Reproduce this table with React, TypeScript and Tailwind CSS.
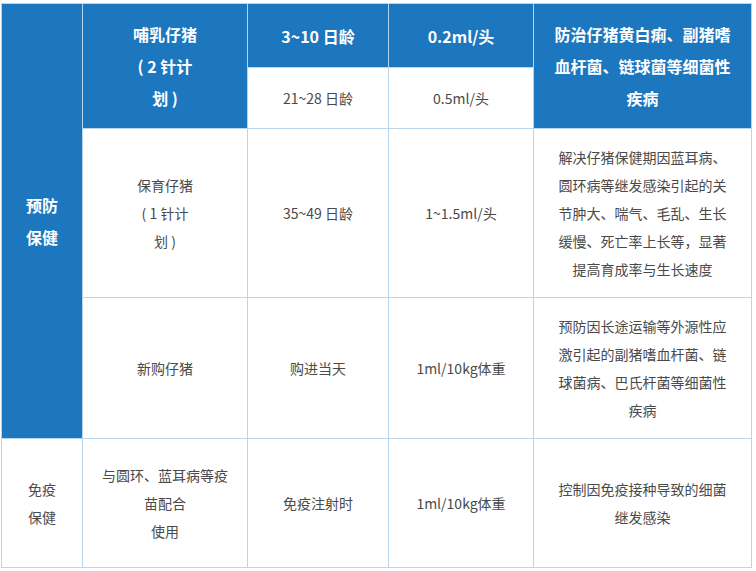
const blue = "bg-[#1d77bf] text-white font-bold text-[16px] leading-[2]";
const cell = "border border-[#b8d5ee] text-center align-middle p-0";
const body = "text-[#4a4a4a] text-[14px] leading-[2]";

export default function App() {
  return (
    <div className="bg-white w-[756px] h-[571px] pt-[3px] pl-[1px] font-['Microsoft_YaHei','Noto_Sans_CJK_SC',sans-serif]">
      <table className="table-fixed border-collapse w-[750px]">
        <colgroup>
          <col className="w-[81px]" />
          <col className="w-[165px]" />
          <col className="w-[141px]" />
          <col className="w-[145px]" />
          <col className="w-[218px]" />
        </colgroup>
        <tbody>
          <tr className="h-[64px]">
            <td rowSpan={4} className={`${cell} ${blue}`}>
              预防
              <br />
              保健
            </td>
            <td rowSpan={2} className={`${cell} ${blue}`}>
              哺乳仔猪
              <br />
              ( 2 针计
              <br />
              划 )
            </td>
            <td className={`${cell} ${blue}`}>3~10 日龄</td>
            <td className={`${cell} ${blue}`}>0.2ml/头</td>
            <td rowSpan={2} className={`${cell} ${blue}`}>
              防治仔猪黄白痢、副猪嗜
              <br />
              血杆菌、链球菌等细菌性
              <br />
              疾病
            </td>
          </tr>
          <tr className="h-[61px]">
            <td className={`${cell} ${body}`}>21~28 日龄</td>
            <td className={`${cell} ${body}`}>0.5ml/头</td>
          </tr>
          <tr className="h-[169px]">
            <td className={`${cell} ${body}`}>
              保育仔猪
              <br />
              ( 1 针计
              <br />
              划 )
            </td>
            <td className={`${cell} ${body}`}>35~49 日龄</td>
            <td className={`${cell} ${body}`}>1~1.5ml/头</td>
            <td className={`${cell} ${body}`}>
              解决仔猪保健期因蓝耳病、
              <br />
              圆环病等继发感染引起的关
              <br />
              节肿大、喘气、毛乱、生长
              <br />
              缓慢、死亡率上长等，显著
              <br />
              提高育成率与生长速度
            </td>
          </tr>
          <tr className="h-[141px]">
            <td className={`${cell} ${body}`}>新购仔猪</td>
            <td className={`${cell} ${body}`}>购进当天</td>
            <td className={`${cell} ${body}`}>1ml/10kg体重</td>
            <td className={`${cell} ${body}`}>
              预防因长途运输等外源性应
              <br />
              激引起的副猪嗜血杆菌、链
              <br />
              球菌病、巴氏杆菌等细菌性
              <br />
              疾病
            </td>
          </tr>
          <tr className="h-[129px]">
            <td className={`${cell} ${body}`}>
              免疫
              <br />
              保健
            </td>
            <td className={`${cell} ${body}`}>
              与圆环、蓝耳病等疫
              <br />
              苗配合
              <br />
              使用
            </td>
            <td className={`${cell} ${body}`}>免疫注射时</td>
            <td className={`${cell} ${body}`}>1ml/10kg体重</td>
            <td className={`${cell} ${body}`}>
              控制因免疫接种导致的细菌
              <br />
              继发感染
            </td>
          </tr>
        </tbody>
      </table>
    </div>
  );
}
